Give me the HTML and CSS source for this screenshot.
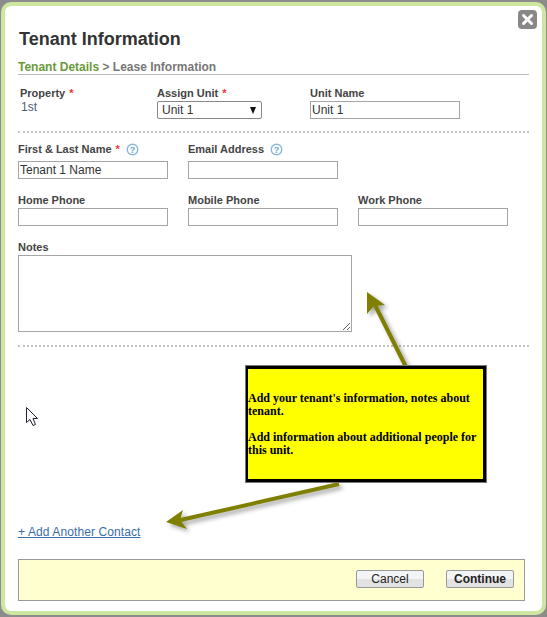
FILE: index.html
```html
<!DOCTYPE html>
<html lang="en">
  <head>
    <meta charset="UTF-8" />
    <meta name="viewport" content="width=device-width, initial-scale=1.0" />
    <title>Tenant Information</title>
    <link rel="stylesheet" href="styles.css">
  </head>
  <body>
    <div class="dialog">
      <button class="close" aria-label="Close">
        <svg width="19" height="19" viewBox="0 0 19 19">
          <path d="M5.5 5.5l8 8M13.5 5.5l-8 8" stroke="#fff" stroke-width="3" stroke-linecap="round" />
        </svg>
      </button>

      <h1>Tenant Information</h1>
      <div class="steps">
        <span class="current">Tenant Details</span> &gt; Lease Information
      </div>

      <div class="row row-unit">
        <div class="field field-property">
          <label>Property <span class="req">*</span></label>
          <div class="value">1st</div>
        </div>
        <div class="field field-assign">
          <label>Assign Unit <span class="req">*</span></label>
          <div class="select-wrap">
            <select><option>Unit 1</option></select>
            <span class="caret"></span>
          </div>
        </div>
        <div class="field">
          <label>Unit Name</label>
          <input type="text" value="Unit 1" />
        </div>
      </div>

      <div class="divider"></div>

      <div class="row row-name">
        <div class="field">
          <label>First &amp; Last Name <span class="req">*</span>
            <svg class="help" width="13" height="13" viewBox="0 0 13 13">
              <circle cx="6.5" cy="6.5" r="5.3" fill="#fff" stroke="#8db8dc" stroke-width="1.4" />
              <text x="6.5" y="10" text-anchor="middle">?</text>
            </svg>
          </label>
          <input type="text" value="Tenant 1 Name" />
        </div>
        <div class="field">
          <label>Email Address
            <svg class="help" width="13" height="13" viewBox="0 0 13 13">
              <circle cx="6.5" cy="6.5" r="5.3" fill="#fff" stroke="#8db8dc" stroke-width="1.4" />
              <text x="6.5" y="10" text-anchor="middle">?</text>
            </svg>
          </label>
          <input type="text" />
        </div>
      </div>

      <div class="row row-phone">
        <div class="field">
          <label>Home Phone</label>
          <input type="text" />
        </div>
        <div class="field">
          <label>Mobile Phone</label>
          <input type="text" />
        </div>
        <div class="field">
          <label>Work Phone</label>
          <input type="text" />
        </div>
      </div>

      <div class="field field-notes">
        <label>Notes</label>
        <textarea></textarea>
      </div>

      <div class="divider divider-notes"></div>

      <a class="add-contact" href="#">+ Add Another Contact</a>

      <div class="footer">
        <button class="btn">Cancel</button>
        <button class="btn btn-primary">Continue</button>
      </div>
    </div>

    <!-- annotations drawn over the dialog -->
    <svg class="arrows" width="547" height="617" viewBox="0 0 547 617">
      <path d="M407 369L373 301" stroke="#808000" stroke-width="4" fill="none" />
      <path d="M367 292L367 314L374 306L385 305Z" fill="#808000" />
      <path d="M339 484L176 521" stroke="#808000" stroke-width="4" fill="none" />
      <path d="M166 522L183 510L180 520L187 529Z" fill="#808000" />
    </svg>

    <div class="callout">
      <p>Add your tenant's information, notes about tenant.</p>
      <p>Add information about additional people for this unit.</p>
    </div>

    <svg class="cursor" width="14" height="21" viewBox="0 0 14 21">
      <path d="M1.5 1.5V16.5L5 13.5L8 19.5L10.5 18.5L8 12.5H12.5Z" fill="#fff" stroke="#223" stroke-width="1" />
    </svg>
  </body>
</html>
```

FILE: styles.css
```css
* {
  box-sizing: border-box;
}

html,
body {
  height: 617px;
}

body {
  margin: 0;
  background: #8c8c8c;
  overflow: hidden;
  font-family: "Liberation Sans", Arial, sans-serif;
  color: #333;
  position: relative;
}

.dialog {
  position: relative;
  margin: 2px 1px 0;
  width: 545px;
  height: 613px;
  padding: 20px 13px 0;
  background: white;
  border: 4px solid #cde6a0;
  border-radius: 10px;
}

.close {
  position: absolute;
  top: 4px;
  right: 5px;
  width: 19px;
  height: 19px;
  padding: 0;
  border: none;
  border-radius: 4px;
  background: #888;
}

.close svg {
  display: block;
}

h1 {
  margin: 0;
  padding-left: 1px;
  font-size: 18px;
  line-height: 26px;
  color: #333;
}

.steps {
  margin-top: 8px;
  border-bottom: 1px solid #bbb;
  font-size: 12px;
  line-height: 14px;
  font-weight: bold;
  color: #777;
}

.steps .current {
  color: #6a9a3a;
}

.row {
  display: flex;
}

.field {
  display: flex;
  flex-direction: column;
}

label {
  display: block;
  font-size: 11px;
  line-height: 13px;
  font-weight: bold;
  color: #444;
  margin-bottom: 1px;
}

.req {
  color: #e33;
  margin-left: 1px;
}

.help {
  vertical-align: -3px;
  margin-left: 3px;
}

.help text {
  font-size: 9px;
  font-weight: bold;
  fill: #6fa3cf;
}

input,
select,
textarea {
  font-family: "Liberation Sans", Arial, sans-serif;
  font-size: 12px;
  color: #333;
  background: white;
  border: 1px solid #a5a5a5;
  border-radius: 0;
  outline: none;
}

input {
  width: 150px;
  height: 18px;
  padding: 0 1px;
}

.row-unit {
  margin-top: 12px;
}

.field-property {
  width: 139px;
  padding-left: 2px;
}

.field-assign {
  width: 153px;
}

.value {
  margin-top: -1px;
  font-size: 12px;
  line-height: 14px;
  color: #4a5f78;
  padding-left: 1px;
}

.select-wrap {
  position: relative;
  width: 105px;
}

select {
  display: block;
  width: 105px;
  height: 18px;
  padding: 0 4px;
  border-color: #888;
  border-radius: 2px;
  appearance: none;
}

.caret {
  position: absolute;
  top: 6px;
  right: 6px;
  border-left: 3px solid transparent;
  border-right: 3px solid transparent;
  border-top: 7px solid #111;
}

.divider {
  margin-top: 12px;
  border-top: 2px dotted #c4c4c4;
}

.row-name {
  margin-top: 10px;
  gap: 20px;
}

.row-name label {
  margin-bottom: 5px;
}

.row-phone {
  margin-top: 15px;
  gap: 20px;
}

.field-notes {
  margin-top: 15px;
}

textarea {
  display: block;
  width: 334px;
  height: 77px;
  padding: 2px;
}

.divider-notes {
  margin-top: 13px;
}

.add-contact {
  display: inline-block;
  margin-top: 178px;
  font-size: 12px;
  line-height: 14px;
  letter-spacing: 0.1px;
  color: #3b6ea5;
}

.footer {
  display: flex;
  justify-content: flex-end;
  gap: 22px;
  margin-top: 19px;
  width: 507px;
  height: 42px;
  padding: 10px 10px 0 0;
  background: #ffffd0;
  border: 1px solid #999;
}

.btn {
  width: 68px;
  height: 18px;
  padding: 0;
  font-family: "Liberation Sans", Arial, sans-serif;
  font-size: 12px;
  color: #222;
  background: linear-gradient(#f2f4f6 50%, #e2e2e2 50%);
  border: 1px solid #999;
  border-radius: 2px;
}

.btn-primary {
  font-weight: bold;
}

.arrows {
  position: absolute;
  top: 0;
  left: 0;
  filter: drop-shadow(3px 3px 2px rgba(0, 0, 0, 0.35));
}

.callout {
  position: absolute;
  top: 366px;
  left: 246px;
  width: 240px;
  height: 116px;
  padding: 23px 0 0;
  display: flex;
  flex-direction: column;
  gap: 13px;
  background: #ffff00;
  border: 3px solid #000;
  border-left-width: 2px;
  outline: 1px solid #777;
  font-family: "Liberation Serif", "Times New Roman", serif;
  font-size: 12px;
  line-height: 13px;
  font-weight: bold;
  color: #000;
}

.callout p {
  margin: 0;
}

.cursor {
  position: absolute;
  top: 406px;
  left: 25px;
}
```
